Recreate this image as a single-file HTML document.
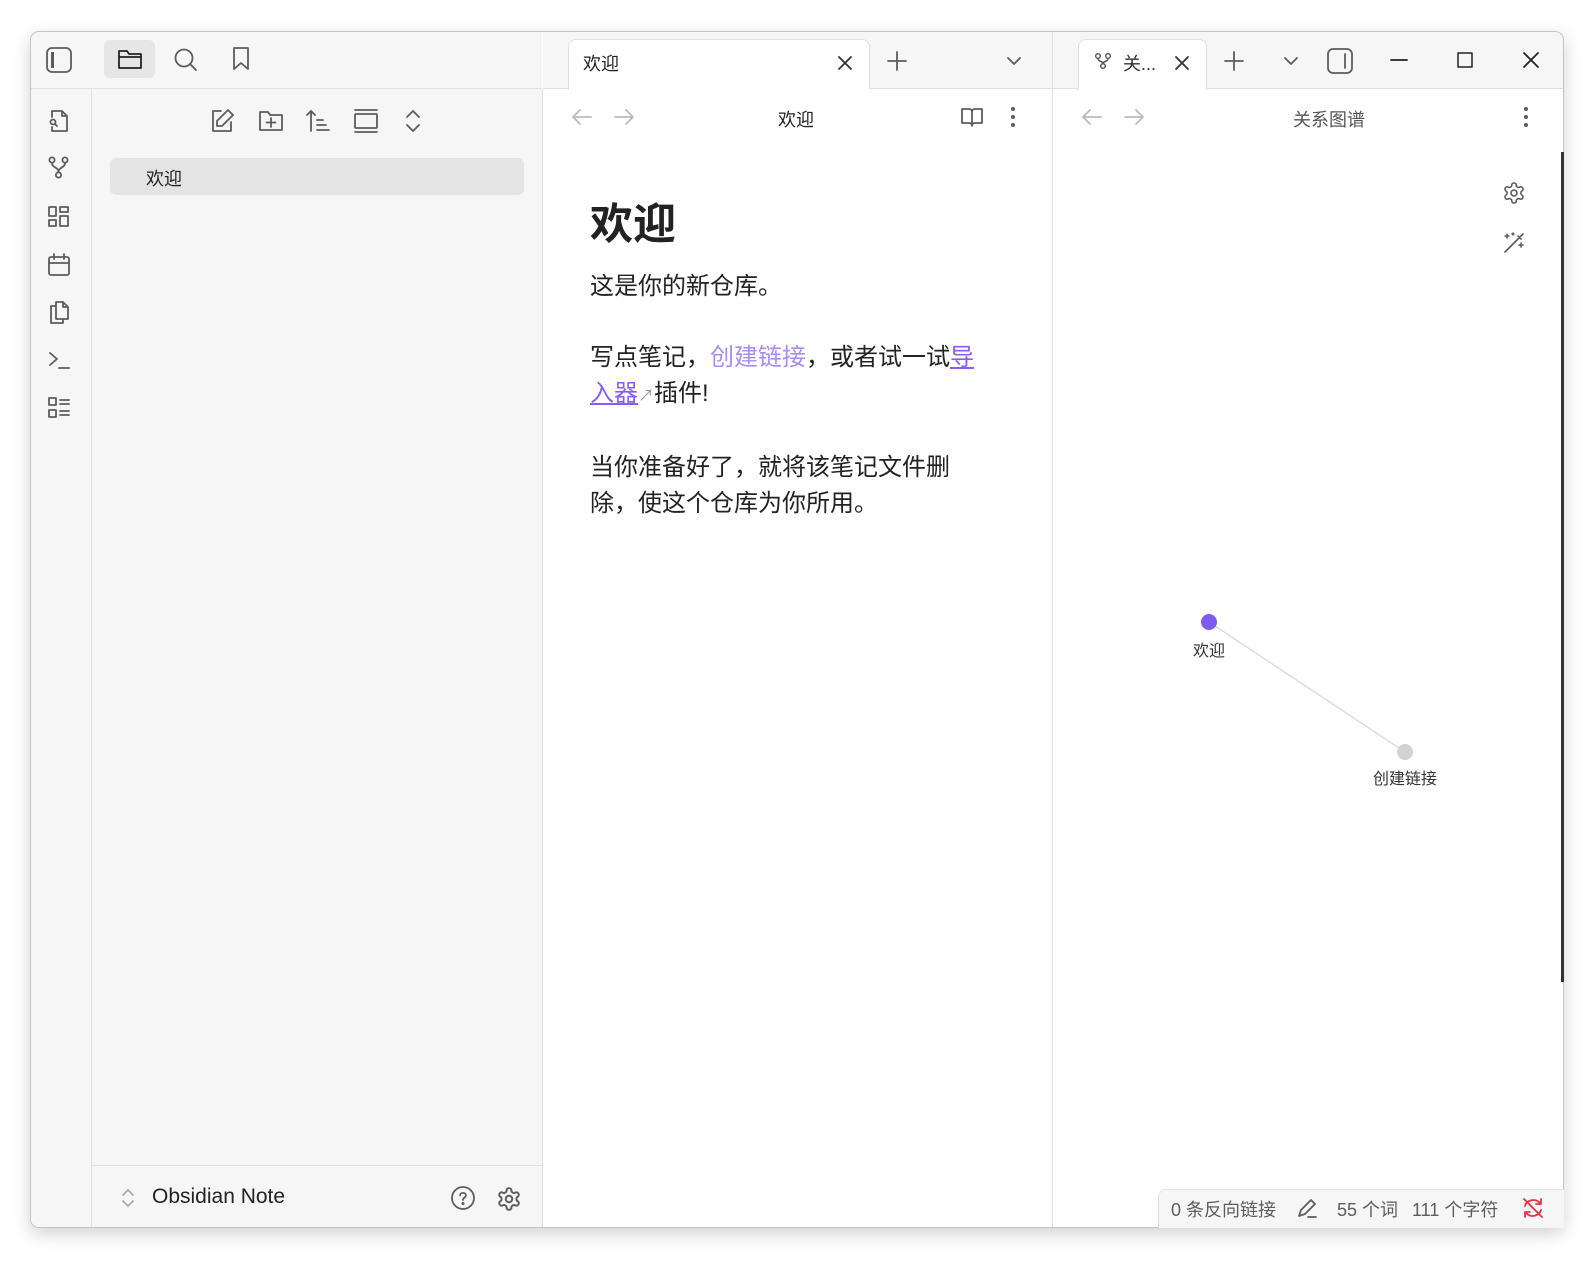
<!DOCTYPE html>
<html><head><meta charset="utf-8"><style>
*{margin:0;padding:0;box-sizing:border-box}
body{width:1593px;height:1262px;background:#fff;position:relative;overflow:hidden;font-family:"Liberation Sans","Noto Sans CJK SC",sans-serif;color:#222}
.a{position:absolute}
svg.i{position:absolute;fill:none;stroke:#5c5c5c;stroke-width:1.8;stroke-linecap:round;stroke-linejoin:round}
.t{position:absolute;white-space:nowrap}
</style></head><body>
<div class="a" style="left:30px;top:31px;width:1534px;height:1197px;border:1px solid #c4c4c4;border-radius:9px;background:#fff;box-shadow:0 6px 18px rgba(0,0,0,.18);overflow:hidden">
</div>
<div class="a" style="left:31px;top:32px;width:511px;height:57px;background:#f6f6f6;border-top-left-radius:8px;border-bottom:1px solid #e0e0e0"></div>
<div class="a" style="left:31px;top:89px;width:61px;height:1138px;background:#f6f6f6;border-right:1px solid #e0e0e0;border-bottom-left-radius:8px"></div>
<div class="a" style="left:92px;top:89px;width:451px;height:1138px;background:#f6f6f6;border-right:1px solid #e0e0e0"></div>
<div class="a" style="left:92px;top:1165px;width:450px;height:1px;background:#e0e0e0"></div>
<div class="a" style="left:543px;top:32px;width:1020px;height:57px;background:#f6f6f6;border-bottom:1px solid #e0e0e0;border-top-right-radius:8px"></div>
<div class="a" style="left:1052px;top:32px;width:1px;height:1195px;background:#e0e0e0"></div>
<div class="a" style="left:568px;top:39px;width:302px;height:51px;background:#fff;border:1px solid #e0e0e0;border-bottom:none;border-radius:8px 8px 0 0"></div>
<div class="t" style="left:583px;top:50px;font-size:18px;color:#222">欢迎</div>
<svg class="i" style="left:835px;top:53px" width="20" height="20"><path d="M4 4L16 16M16 4L4 16" stroke="#333"/></svg>
<svg class="i" style="left:886px;top:50px" width="22" height="22"><path d="M11 2V20M2 11H20"/></svg>
<svg class="i" style="left:1005px;top:52px" width="18" height="18"><path d="M3 6L9 12L15 6"/></svg>
<div class="a" style="left:1078px;top:39px;width:129px;height:51px;background:#fff;border:1px solid #e0e0e0;border-bottom:none;border-radius:8px 8px 0 0"></div>
<svg class="i" style="left:1094px;top:52px;stroke-width:1.5" width="18" height="18"><circle cx="4" cy="4" r="2.3"/><circle cx="14" cy="4" r="2.3"/><circle cx="9" cy="14" r="2.3"/><path d="M4 6.5C4 10 9 9 9 11.5M14 6.5C14 10 9 9 9 11.5"/></svg>
<div class="t" style="left:1123px;top:50px;font-size:18px;color:#333">关...</div>
<svg class="i" style="left:1172px;top:53px" width="20" height="20"><path d="M4 4L16 16M16 4L4 16" stroke="#333"/></svg>
<svg class="i" style="left:1223px;top:50px" width="22" height="22"><path d="M11 2V20M2 11H20"/></svg>
<svg class="i" style="left:1282px;top:52px" width="18" height="18"><path d="M3 6L9 12L15 6"/></svg>
<svg class="i" style="left:1326px;top:47px" width="28" height="28"><rect x="2" y="2" width="24" height="24" rx="5"/><path d="M19 7V21"/></svg>
<svg class="i" style="left:1389px;top:50px;stroke:#222" width="20" height="20"><path d="M2 10H18"/></svg>
<svg class="i" style="left:1455px;top:50px;stroke:#222;stroke-width:1.5" width="20" height="20"><rect x="3" y="3" width="14" height="14"/></svg>
<svg class="i" style="left:1521px;top:50px;stroke:#222" width="20" height="20"><path d="M3 3L17 17M17 3L3 17"/></svg>
<svg class="i" style="left:45px;top:46px" width="28" height="28"><rect x="2" y="2" width="24" height="24" rx="5"/><rect x="6" y="6" width="3" height="16" fill="#5c5c5c" stroke="none"/></svg>
<div class="a" style="left:104px;top:40px;width:51px;height:38px;background:#e6e6e6;border-radius:6px"></div>
<svg class="i" style="left:117px;top:47px;stroke:#222" width="26" height="24"><path d="M2 4H10L12 7H24V21H2Z M2 10H24"/></svg>
<svg class="i" style="left:173px;top:47px" width="26" height="26"><circle cx="11" cy="11" r="8.5"/><path d="M17 17L23 23"/></svg>
<svg class="i" style="left:230px;top:46px" width="22" height="26"><path d="M4 2H18V23L11 17L4 23Z"/></svg>
<svg class="i" style="left:47px;top:108px" width="24" height="26"><path d="M5 9V3H15L20 8V23H5V19M15 3V8H20"/><circle cx="6" cy="14" r="2.5"/><path d="M8 16L10 18"/></svg>
<svg class="i" style="left:47px;top:156px" width="24" height="24"><circle cx="5" cy="4" r="2.6"/><circle cx="18" cy="4" r="2.6"/><circle cx="11.5" cy="19" r="2.6"/><path d="M5 7C5 12 11.5 11 11.5 16M18 7C18 12 11.5 11 11.5 16"/></svg>
<svg class="i" style="left:47px;top:205px" width="24" height="24"><rect x="2" y="2" width="7" height="9"/><rect x="13" y="2" width="8" height="5"/><rect x="13" y="11" width="8" height="10"/><rect x="2" y="15" width="7" height="6"/></svg>
<svg class="i" style="left:47px;top:253px" width="24" height="24"><rect x="2" y="4" width="20" height="18" rx="2"/><path d="M2 10H22M7 1V6M17 1V6"/></svg>
<svg class="i" style="left:47px;top:300px" width="24" height="25"><path d="M9 2H16L21 7V19H9Z M16 2V7H21M9 6H4V23H16V19"/></svg>
<svg class="i" style="left:47px;top:349px" width="24" height="22"><path d="M3 4L10 10L3 16M12 19H22"/></svg>
<svg class="i" style="left:47px;top:396px" width="24" height="24"><rect x="2" y="2" width="7" height="7"/><rect x="2" y="14" width="7" height="7"/><path d="M13 4H22M13 8H22M13 15H22M13 19H22"/></svg>
<svg class="i" style="left:209px;top:108px" width="26" height="26"><path d="M12 3H4V23H22V14M19 2L24 7L13 18H8V13Z"/></svg>
<svg class="i" style="left:258px;top:108px" width="26" height="26"><path d="M2 4H10L12 7H24V22H2Z M13 10V19M8.5 14.5H17.5"/></svg>
<svg class="i" style="left:305px;top:108px" width="26" height="26"><path d="M6 23V3M2 7L6 3L10 7M12 12H18M12 17H21M12 22H24"/></svg>
<svg class="i" style="left:353px;top:108px" width="26" height="26"><path d="M2 2H24M2 24H24"/><rect x="2" y="6" width="22" height="14" rx="1"/></svg>
<svg class="i" style="left:401px;top:108px" width="24" height="26"><path d="M6 9L12 3L18 9M6 17L12 23L18 17"/></svg>
<div class="a" style="left:110px;top:158px;width:414px;height:37px;background:#e4e4e4;border-radius:6px"></div>
<div class="t" style="left:146px;top:165px;font-size:18px;color:#222">欢迎</div>
<svg class="i" style="left:120px;top:1186px;stroke:#aaa" width="16" height="24"><path d="M3 9L8 4L13 9M3 15L8 20L13 15"/></svg>
<div class="t" style="left:152px;top:1185px;font-size:21px;color:#222">Obsidian Note</div>
<svg class="i" style="left:450px;top:1185px" width="26" height="26"><circle cx="13" cy="13" r="11"/><path d="M10 10.5C10 7 16 7 16 10.5C16 12.5 13 12.5 13 15" /><circle cx="13" cy="18.5" r=".6" fill="#5c5c5c"/></svg>
<svg class="i" style="left:496px;top:1186px" width="26" height="26" viewBox="0 0 24 24"><path d="M12.22 2h-.44a2 2 0 0 0-2 2v.18a2 2 0 0 1-1 1.730l-.43.25a2 2 0 0 1-2 0l-.15-.08a2 2 0 0 0-2.73.73l-.22.38a2 2 0 0 0 .73 2.73l.15.1a2 2 0 0 1 1 1.72v.51a2 2 0 0 1-1 1.74l-.15.09a2 2 0 0 0-.73 2.73l.22.38a2 2 0 0 0 2.73.73l.15-.08a2 2 0 0 1 2 0l.43.25a2 2 0 0 1 1 1.73V20a2 2 0 0 0 2 2h.44a2 2 0 0 0 2-2v-.18a2 2 0 0 1 1-1.73l.43-.25a2 2 0 0 1 2 0l.15.08a2 2 0 0 0 2.73-.73l.22-.39a2 2 0 0 0-.73-2.730l-.15-.08a2 2 0 0 1-1-1.74v-.5a2 2 0 0 1 1-1.74l.15-.09a2 2 0 0 0 .73-2.73l-.22-.38a2 2 0 0 0-2.73-.73l-.15.08a2 2 0 0 1-2 0l-.43-.25a2 2 0 0 1-1-1.73V4a2 2 0 0 0-2-2z"/><circle cx="12" cy="12" r="3"/></svg>
<svg class="i" style="left:571px;top:107px;stroke:#bbb" width="22" height="20"><path d="M20 10H2M9 3L2 10L9 17"/></svg>
<svg class="i" style="left:613px;top:107px;stroke:#bbb" width="22" height="20"><path d="M2 10H20M13 3L20 10L13 17"/></svg>
<div class="t" style="left:778px;top:106px;font-size:18px;color:#222">欢迎</div>
<svg class="i" style="left:960px;top:106px" width="24" height="22"><path d="M2 3H9C11 3 12 4 12 6V20C12 18 11 17 9 17H2Z M22 3H15C13 3 12 4 12 6V20C12 18 13 17 15 17H22Z"/></svg>
<svg class="a" style="left:1009px;top:106px" width="8" height="22"><circle cx="4" cy="3" r="2" fill="#5c5c5c"/><circle cx="4" cy="11" r="2" fill="#5c5c5c"/><circle cx="4" cy="19" r="2" fill="#5c5c5c"/></svg>
<div class="t" style="left:590px;top:190px;font-size:43px;font-weight:bold;color:#222">欢迎</div>
<div class="a" style="left:590px;top:269px;font-size:24px;line-height:36.5px;color:#222;white-space:nowrap">
<div>这是你的新仓库。</div>
<div style="margin-top:34px">写点笔记，<span style="color:#a88bfa">创建链接</span>，或者试一试<span style="color:#8a5cf5;text-decoration:underline">导</span><br><span style="color:#8a5cf5;text-decoration:underline">入器</span><span style="color:#999;font-size:16px">↗</span>插件!</div>
<div style="margin-top:34px">当你准备好了，就将该笔记文件删<br>除，使这个仓库为你所用。</div>
</div>
<svg class="i" style="left:1081px;top:107px;stroke:#bbb" width="22" height="20"><path d="M20 10H2M9 3L2 10L9 17"/></svg>
<svg class="i" style="left:1123px;top:107px;stroke:#bbb" width="22" height="20"><path d="M2 10H20M13 3L20 10L13 17"/></svg>
<div class="t" style="left:1293px;top:106px;font-size:18px;color:#555">关系图谱</div>
<svg class="a" style="left:1522px;top:106px" width="8" height="22"><circle cx="4" cy="3" r="2" fill="#5c5c5c"/><circle cx="4" cy="11" r="2" fill="#5c5c5c"/><circle cx="4" cy="19" r="2" fill="#5c5c5c"/></svg>
<svg class="i" style="left:1502px;top:181px;stroke-width:1.6" width="24" height="24" viewBox="0 0 24 24"><path d="M12.22 2h-.44a2 2 0 0 0-2 2v.18a2 2 0 0 1-1 1.73l-.43.25a2 2 0 0 1-2 0l-.15-.08a2 2 0 0 0-2.73.73l-.22.38a2 2 0 0 0 .73 2.73l.15.1a2 2 0 0 1 1 1.72v.51a2 2 0 0 1-1 1.74l-.15.09a2 2 0 0 0-.73 2.73l.22.38a2 2 0 0 0 2.73.73l.15-.08a2 2 0 0 1 2 0l.43.25a2 2 0 0 1 1 1.73V20a2 2 0 0 0 2 2h.44a2 2 0 0 0 2-2v-.18a2 2 0 0 1 1-1.73l.43-.25a2 2 0 0 1 2 0l.15.08a2 2 0 0 0 2.73-.73l.22-.39a2 2 0 0 0-.73-2.73l-.15-.08a2 2 0 0 1-1-1.74v-.5a2 2 0 0 1 1-1.74l.15-.09a2 2 0 0 0 .73-2.73l-.22-.38a2 2 0 0 0-2.73-.73l-.15.08a2 2 0 0 1-2 0l-.43-.25a2 2 0 0 1-1-1.73V4a2 2 0 0 0-2-2z"/><circle cx="12" cy="12" r="3"/></svg>
<svg class="i" style="left:1502px;top:231px;stroke-width:1.6" width="24" height="24"><path d="M3 21L21 3M16 5L19 8M5 3V7M3 5H7M11 2V4M10 3H12M19 12V16M17 14H21"/></svg>
<svg class="a" style="left:1053px;top:90px" width="510" height="1100"><line x1="156" y1="532" x2="352" y2="662" stroke="#d8d8d8" stroke-width="1.3"/><circle cx="156" cy="532" r="8" fill="#7f5af0"/><circle cx="352" cy="662" r="8" fill="#d3d3d3"/></svg>
<div class="t" style="left:1193px;top:637px;font-size:16px;color:#333">欢迎</div>
<div class="t" style="left:1373px;top:765px;font-size:16px;color:#333">创建链接</div>
<div class="a" style="left:1561px;top:152px;width:3px;height:830px;background:#333"></div>
<div class="a" style="left:1158px;top:1189px;width:406px;height:39px;background:#f6f6f6;border:1px solid #e0e0e0;border-right:none;border-bottom:none;border-top-left-radius:8px"></div>
<div class="t" style="left:1171px;top:1196px;font-size:18px;color:#5c5c5c">0 条反向链接</div>
<svg class="i" style="left:1296px;top:1197px" width="24" height="22"><path d="M3 19L5 13L15 3L19 7L9 17Z M12 20H20"/></svg>
<div class="t" style="left:1337px;top:1196px;font-size:18px;color:#5c5c5c">55 个词</div>
<div class="t" style="left:1412px;top:1196px;font-size:18px;color:#5c5c5c">111 个字符</div>
<svg class="i" style="left:1521px;top:1197px;stroke:#e93147" width="24" height="22"><path d="M4 9C5 5 9 3 13 3C16 3 18 5 20 7M20 2V7H15M20 13C19 17 15 19 11 19C8 19 6 17 4 15M4 20V15H9M3 2L21 20"/></svg>
</body></html>
